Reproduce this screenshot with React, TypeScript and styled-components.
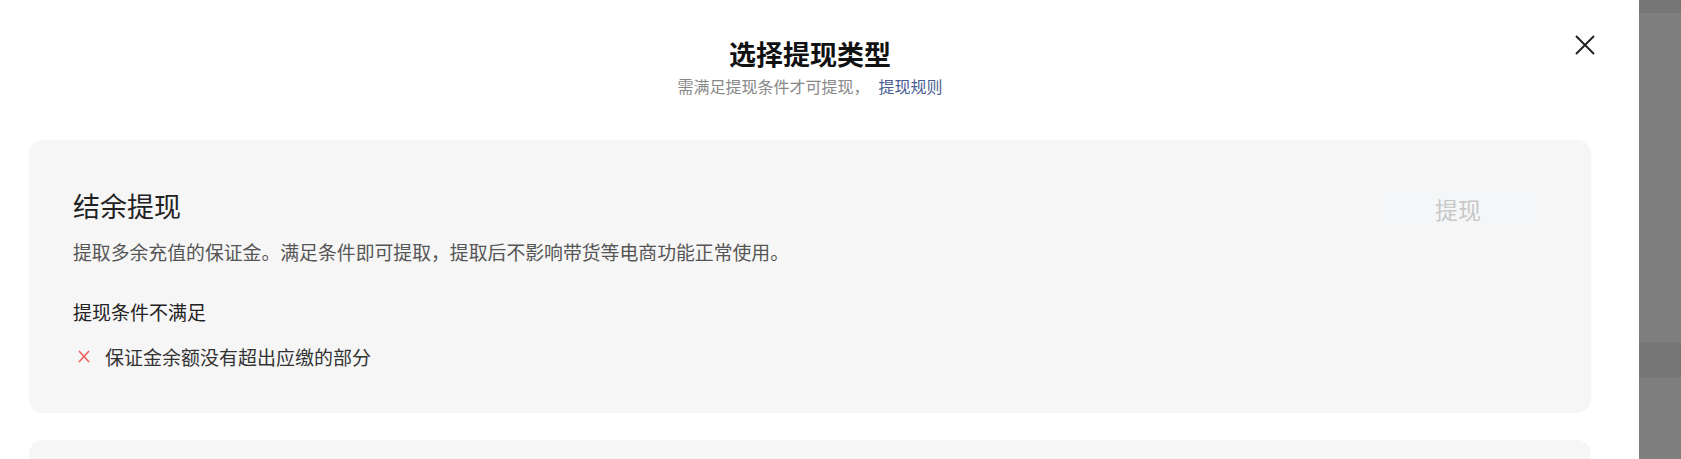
import React from 'react';
import styled, { createGlobalStyle } from 'styled-components';

const GlobalStyle = createGlobalStyle`
  html, body {
    margin: 0;
    padding: 0;
    background: #ffffff;
  }
  body {
    font-family: "Noto Sans CJK SC", "Noto Sans", "Liberation Sans", sans-serif;
  }
`;

type Condition = { text: string; ok: boolean };

const conditions: Condition[] = [{ text: '保证金余额没有超出应缴的部分', ok: false }];

const App = () => {
  return (
    <>
      <GlobalStyle />
      <Page>
        <Modal>
          <Content>
            <Header>
              <Title>选择提现类型</Title>
              <SubTitle>
                需满足提现条件才可提现，<RuleLink href="#">提现规则</RuleLink>
              </SubTitle>
            </Header>

            <Card>
              <CardMain>
                <CardTitle>结余提现</CardTitle>
                <CardDesc>提取多余充值的保证金。满足条件即可提取，提取后不影响带货等电商功能正常使用。</CardDesc>
                <CondTitle>提现条件不满足</CondTitle>
                {conditions.map((c) => (
                  <CondRow key={c.text}>
                    <CrossIcon viewBox="0 0 12 13">
                      <path d="M1 1 L11 12 M11 1 L1 12" />
                    </CrossIcon>
                    <CondText>{c.text}</CondText>
                  </CondRow>
                ))}
              </CardMain>
              <WithdrawButton disabled>提现</WithdrawButton>
            </Card>

            <Card $peek />
          </Content>
          <CloseButton aria-label="关闭">
            <svg width="20" height="20" viewBox="0 0 20 20">
              <path d="M1 1 L19 19 M19 1 L1 19" stroke="#222" strokeWidth="2" fill="none" />
            </svg>
          </CloseButton>
        </Modal>
        <Backdrop>
          <Band $dark $h={13} />
          <Band $h={329} />
          <Band $dark $h={36} />
          <Band $h={81} />
        </Backdrop>
      </Page>
    </>
  );
};

export default App;

const Page = styled.div`
  display: flex;
  width: 1681px;
  height: 459px;
  overflow: hidden;
`;

const Modal = styled.div`
  position: relative;
  flex: 1;
  background: #ffffff;
  overflow: hidden;
`;

const Content = styled.div`
  display: flex;
  flex-direction: column;
  width: 1562px;
  margin-left: 29px;
  padding-top: 40px;
`;

const Header = styled.div`
  display: flex;
  flex-direction: column;
  align-items: center;
  margin-bottom: 46px;
`;

const Title = styled.h1`
  margin: 0;
  font-size: 27px;
  line-height: 27px;
  font-weight: 700;
  color: #111;
`;

const SubTitle = styled.p`
  margin: 11px 0 0;
  font-size: 16px;
  line-height: 16px;
  color: #888;
`;

const RuleLink = styled.a`
  margin-left: 9px;
  color: #4a5e92;
  text-decoration: none;
`;

const Card = styled.div<{ $peek?: boolean }>`
  display: flex;
  align-items: flex-start;
  justify-content: space-between;
  background: #f6f6f6;
  border-radius: 14px;
  padding: ${(p) => (p.$peek ? '0' : '52px 55px 47px 44px')};
  height: ${(p) => (p.$peek ? '60px' : 'auto')};
  margin-bottom: 27px;
`;

const CardMain = styled.div`
  display: flex;
  flex-direction: column;
`;

const CardTitle = styled.h2`
  margin: 0;
  font-size: 27px;
  line-height: 27px;
  font-weight: 400;
  color: #222;
`;

const CardDesc = styled.p`
  margin: 23px 0 0;
  font-size: 18.85px;
  line-height: 19px;
  color: #555;
`;

const CondTitle = styled.div`
  margin-top: 41px;
  font-size: 19px;
  line-height: 19px;
  color: #222;
`;

const CondRow = styled.div`
  display: flex;
  align-items: center;
  margin-top: 26px;
  padding-left: 5px;
  gap: 15px;
`;

const CrossIcon = styled.svg`
  width: 12px;
  height: 13px;
  flex-shrink: 0;

  path {
    stroke: #f25a5a;
    stroke-width: 1.5;
    fill: none;
  }
`;

const CondText = styled.span`
  font-size: 19px;
  line-height: 19px;
  color: #333;
`;

const WithdrawButton = styled.button`
  width: 156px;
  height: 34px;
  margin-top: 0;
  border: none;
  border-radius: 4px;
  background: #f5f6f7;
  color: #c8c8c8;
  font-family: inherit;
  font-size: 23px;
  line-height: 34px;
  padding: 0;
  cursor: not-allowed;
`;

const CloseButton = styled.button`
  position: absolute;
  top: 35px;
  left: 1575px;
  width: 20px;
  height: 20px;
  padding: 0;
  border: none;
  background: transparent;
  display: flex;
  cursor: pointer;
`;

const Backdrop = styled.div`
  width: 42px;
  display: flex;
  flex-direction: column;
`;

const Band = styled.div<{ $dark?: boolean; $h: number }>`
  height: ${(p) => p.$h}px;
  flex-shrink: 0;
  background: ${(p) => (p.$dark ? '#767676' : '#7f7f7f')};
`;
